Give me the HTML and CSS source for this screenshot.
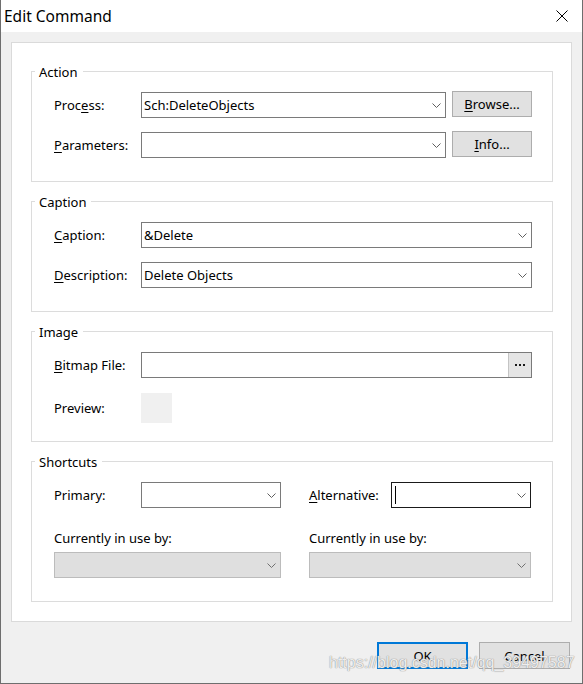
FILE: index.html
```html
<!DOCTYPE html>
<html>
<head>
<meta charset="utf-8">
<link rel="stylesheet" href="styles.css">
</head>
<body>
<div class="window">
  <div class="titlebar">
    <span class="title">Edit Command</span>
    <svg class="close" viewBox="0 0 12 12"><path d="M0.5 0.5 L11.5 11.5 M11.5 0.5 L0.5 11.5" stroke="#000" stroke-width="1" fill="none"/></svg>
  </div>
  <div class="panel">
    <div class="group g-action">
      <span class="legend">Action</span>
      <div class="rows">
        <div class="row">
          <span class="lbl">Proc<u>e</u>ss:</span>
          <div class="combo grow"><span class="val">Sch:DeleteObjects</span><span class="dd"><svg class="chev" viewBox="0 0 9 5"><polyline points="0.5,0.5 4.5,4.5 8.5,0.5"/></svg></span></div>
          <div class="btn side"><span><u>B</u>rowse...</span></div>
        </div>
        <div class="row">
          <span class="lbl"><u>P</u>arameters:</span>
          <div class="combo grow"><span class="val"></span><span class="dd"><svg class="chev" viewBox="0 0 9 5"><polyline points="0.5,0.5 4.5,4.5 8.5,0.5"/></svg></span></div>
          <div class="btn side"><span><u>I</u>nfo...</span></div>
        </div>
      </div>
    </div>

    <div class="group g-caption">
      <span class="legend">Caption</span>
      <div class="rows">
        <div class="row">
          <span class="lbl"><u>C</u>aption:</span>
          <div class="combo grow"><span class="val">&amp;Delete</span><span class="dd"><svg class="chev" viewBox="0 0 9 5"><polyline points="0.5,0.5 4.5,4.5 8.5,0.5"/></svg></span></div>
        </div>
        <div class="row">
          <span class="lbl"><u>D</u>escription:</span>
          <div class="combo grow"><span class="val">Delete Objects</span><span class="dd"><svg class="chev" viewBox="0 0 9 5"><polyline points="0.5,0.5 4.5,4.5 8.5,0.5"/></svg></span></div>
        </div>
      </div>
    </div>

    <div class="group g-image">
      <span class="legend">Image</span>
      <div class="row">
        <span class="lbl"><u>B</u>itmap File:</span>
        <div class="combo grow"><span class="val"></span><span class="ellip"><svg class="dots" viewBox="0 0 10 2"><rect x="0" y="0" width="2" height="2"/><rect x="4" y="0" width="2" height="2"/><rect x="8" y="0" width="2" height="2"/></svg></span></div>
      </div>
      <div class="row preview-row">
        <span class="lbl">Preview:</span>
        <div class="preview"></div>
      </div>
    </div>

    <div class="group g-short">
      <span class="legend">Shortcuts</span>
      <div class="sgrid">
        <div class="row">
          <span class="lbl">Primary:</span>
          <div class="combo w140"><span class="val"></span><span class="dd"><svg class="chev" viewBox="0 0 9 5"><polyline points="0.5,0.5 4.5,4.5 8.5,0.5"/></svg></span></div>
        </div>
        <div class="row">
          <span class="lbl lbl-alt"><u>A</u>lternative:</span>
          <div class="combo w140 focus"><span class="val"><span class="caret"></span></span><span class="dd"><svg class="chev" viewBox="0 0 9 5"><polyline points="0.5,0.5 4.5,4.5 8.5,0.5"/></svg></span></div>
        </div>
        <span class="use-lbl">Currently in use by:</span>
        <span class="use-lbl">Currently in use by:</span>
        <div class="combo disabled"><span class="val"></span><span class="dd"><svg class="chev" viewBox="0 0 9 5"><polyline points="0.5,0.5 4.5,4.5 8.5,0.5"/></svg></span></div>
        <div class="combo disabled"><span class="val"></span><span class="dd"><svg class="chev" viewBox="0 0 9 5"><polyline points="0.5,0.5 4.5,4.5 8.5,0.5"/></svg></span></div>
      </div>
    </div>
  </div>

  <div class="footer">
    <div class="btn dlg default">OK</div>
    <div class="btn dlg">Cancel</div>
  </div>

  <div class="watermark">https://blog.csdn.net/qq_39497587</div>
</div>
</body>
</html>
```

FILE: styles.css
```css
* { box-sizing: border-box; }

body {
  margin: 0;
  font-family: "Noto Sans", "Segoe UI", "DejaVu Sans", sans-serif;
  font-size: 13px;
  color: #000;
  background: #fff;
}

u { text-decoration: underline; text-underline-offset: 2px; text-decoration-thickness: 1px; }

.window {
  position: relative;
  width: 583px;
  height: 684px;
  background: #f0f0f0;
  border: 1px solid #6e6e6e;
  border-top: none;
  display: flex;
  flex-direction: column;
  overflow: hidden;
}

.titlebar {
  flex: none;
  height: 32px;
  background: #fff;
  display: flex;
  align-items: center;
  justify-content: space-between;
  padding: 0 14px 0 3px;
}

.title {
  font-size: 15.5px;
  line-height: 20px;
}

.close {
  width: 12px;
  height: 12px;
  display: block;
}

.panel {
  margin: 10px 10px 0 10px;
  background: #fff;
  border: 1px solid #dadada;
  padding: 28px 18px 19px 19px;
  display: flex;
  flex-direction: column;
  gap: 19px;
}

.group {
  position: relative;
  border: 1px solid #dcdcdc;
  padding: 20px 20px 23px 22px;
}

.g-image { padding-bottom: 18px; }

.legend {
  position: absolute;
  top: -8px;
  left: 3px;
  padding: 0 5px 0 4px;
  background: #fff;
  line-height: 16px;
}

.rows {
  display: flex;
  flex-direction: column;
  gap: 14px;
}

.row {
  display: flex;
  align-items: center;
  height: 26px;
}

.lbl {
  flex: none;
  width: 87px;
  white-space: nowrap;
}

.lbl-alt { width: 82px; }

.combo {
  height: 26px;
  border: 1px solid #7a7a7a;
  background: #fff;
  display: flex;
  align-items: stretch;
}

.combo.grow { flex: 1; }
.combo.w140 { width: 140px; flex: none; }

.combo .val {
  flex: 1;
  padding-left: 2px;
  white-space: nowrap;
  display: flex;
  align-items: center;
}

.combo .dd {
  flex: none;
  width: 17px;
  display: flex;
  align-items: center;
  justify-content: center;
}

.chev {
  width: 9px;
  height: 5px;
  display: block;
}

.chev polyline {
  fill: none;
  stroke: #5f5f5f;
  stroke-width: 1;
}

.combo.focus { border-color: #1a1a1a; }

.caret {
  display: block;
  width: 1px;
  height: 18px;
  background: #000;
  margin-left: 1px;
}

.combo.disabled {
  background: #dfdfdf;
  border-color: #bcbcbc;
}

.combo.disabled .chev polyline { stroke: #707070; }

.ellip {
  flex: none;
  width: 23px;
  background: #e5e5e5;
  border-left: 1px solid #c4c4c4;
  display: flex;
  align-items: center;
  justify-content: center;
}

.dots {
  width: 10px;
  height: 2px;
  display: block;
  fill: #1a1a1a;
}

.preview-row {
  height: 30px;
  margin-top: 15px;
}

.preview {
  width: 31px;
  height: 30px;
  background: #f0f0f0;
}

.btn {
  background: #e1e1e1;
  border: 1px solid #adadad;
  display: flex;
  align-items: center;
  justify-content: center;
  white-space: nowrap;
}

.btn.side {
  flex: none;
  width: 80px;
  height: 26px;
  margin-left: 6px;
  align-self: flex-start;
  margin-top: -1px;
}

.sgrid {
  display: grid;
  grid-template-columns: 227px 222px;
  column-gap: 28px;
}

.use-lbl {
  line-height: 16px;
  margin-top: 22px;
  margin-bottom: 6px;
  white-space: nowrap;
}

.footer {
  display: flex;
  justify-content: flex-end;
  gap: 11px;
  padding: 20px 12px 0 0;
}

.btn.dlg {
  width: 91px;
  height: 27px;
}

.btn.default {
  border: 2px solid #0078d7;
}

.watermark {
  position: absolute;
  left: 328px;
  top: 653px;
  font-family: "Liberation Sans", Arial, sans-serif;
  font-size: 16px;
  line-height: 20px;
  color: rgba(255, 255, 255, 0.85);
  text-shadow: 0 0 1px #8a8a8a, 0 0 1px #a0a0a0;
  white-space: nowrap;
  pointer-events: none;
}
```
